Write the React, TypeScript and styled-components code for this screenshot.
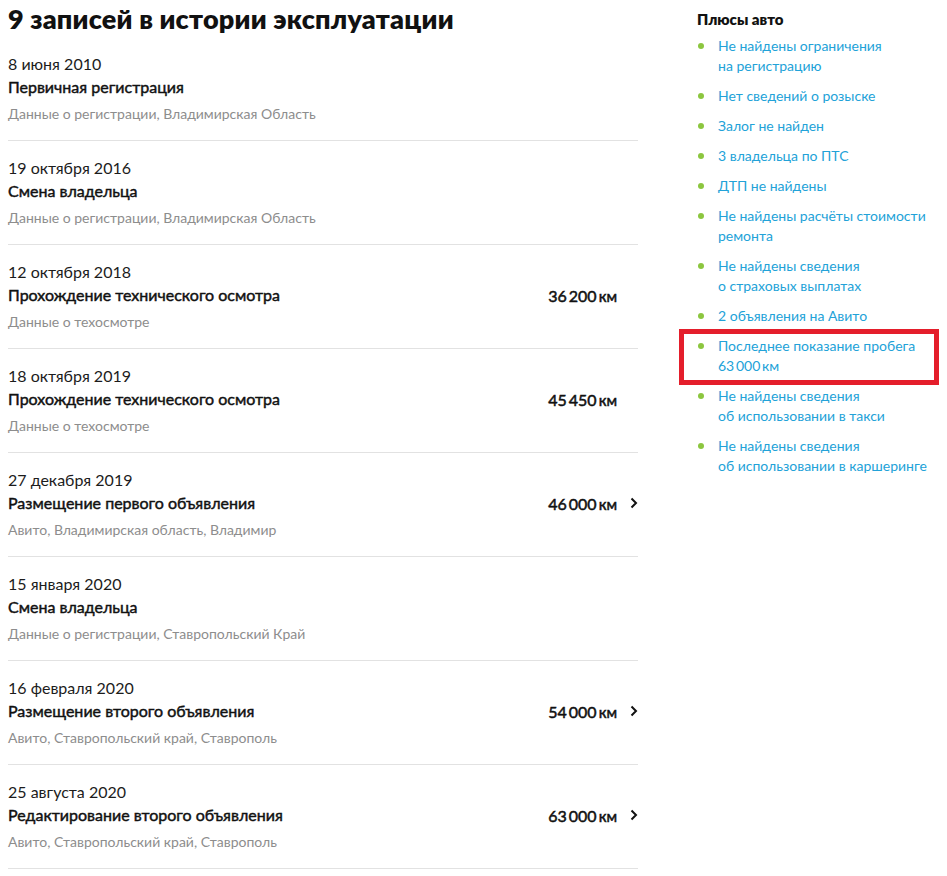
import React from "react";
import styled, { createGlobalStyle } from "styled-components";

const GlobalStyle = createGlobalStyle`
  body {
    margin: 0;
    background: #fff;
    font-family: Lato, "Noto Sans", sans-serif;
    color: #111;
  }
`;

const Page = styled.div`
  display: grid;
  grid-template-columns: 630px 1fr;
  column-gap: 59px;
  padding-left: 8px;
  width: 939px;
  box-sizing: border-box;
`;

const Heading = styled.h1`
  margin: 0;
  font-size: 27px;
  line-height: 37px;
  font-weight: 800;
  letter-spacing: 0.2px;
  color: #111;
`;

const Row = styled.div`
  display: flex;
  align-items: flex-start;
  justify-content: space-between;
  padding: 17px 0 16px;
  border-bottom: 1px solid #e2e2e2;
`;

const Info = styled.div`
  display: flex;
  flex-direction: column;
`;

const Date = styled.div`
  font-size: 16px;
  line-height: 20px;
  color: #1c1c1c;
`;

const Title = styled.div`
  margin-top: 2px;
  font-size: 16px;
  line-height: 22px;
  font-weight: 400;
  -webkit-text-stroke: 0.45px #111;
  color: #111;
`;

const Source = styled.div`
  margin-top: 6px;
  font-size: 14px;
  line-height: 20px;
  color: #8d8d8d;
`;

const Side = styled.div`
  display: flex;
  align-items: center;
  margin-top: 22px;
  height: 22px;
`;

const Mileage = styled.span`
  font-size: 16px;
  font-weight: 400;
  -webkit-text-stroke: 0.5px #111;
  color: #111;
`;

const Unit = styled.span`
  font-size: 15px;
`;

const ChevronSlot = styled.span`
  display: flex;
  align-items: center;
  justify-content: flex-end;
  width: 21px;
`;

const Aside = styled.aside`
  padding-top: 8px;
`;

const AsideTitle = styled.div`
  font-size: 15px;
  line-height: 22px;
  font-weight: 800;
  color: #111;
`;

const List = styled.ul`
  list-style: none;
  margin: 6px 0 0;
  padding: 0;
  display: flex;
  flex-direction: column;
  gap: 10px;
`;

const Item = styled.li<{ $marked?: boolean }>`
  position: relative;
  display: flex;
  gap: 14px;
  font-size: 14px;
  line-height: 20px;
  color: #22a2d8;

  &::before {
    content: "";
    flex: none;
    width: 6px;
    height: 6px;
    margin: 7px 0 0 1px;
    border-radius: 50%;
    background: #8cc63f;
  }

  ${(p) =>
    p.$marked &&
    `
    &::after {
      content: "";
      position: absolute;
      left: -18px;
      right: 0;
      top: -7px;
      bottom: -9px;
      border: 5px solid #e41e2b;
      pointer-events: none;
    }
  `}
`;

type Entry = {
  date: string;
  title: string;
  source: string;
  km?: string;
  link?: boolean;
};

const entries: Entry[] = [
  { date: "8 июня 2010", title: "Первичная регистрация", source: "Данные о регистрации, Владимирская Область" },
  { date: "19 октября 2016", title: "Смена владельца", source: "Данные о регистрации, Владимирская Область" },
  { date: "12 октября 2018", title: "Прохождение технического осмотра", source: "Данные о техосмотре", km: "36\u2009200" },
  { date: "18 октября 2019", title: "Прохождение технического осмотра", source: "Данные о техосмотре", km: "45\u2009450" },
  { date: "27 декабря 2019", title: "Размещение первого объявления", source: "Авито, Владимирская область, Владимир", km: "46\u2009000", link: true },
  { date: "15 января 2020", title: "Смена владельца", source: "Данные о регистрации, Ставропольский Край" },
  { date: "16 февраля 2020", title: "Размещение второго объявления", source: "Авито, Ставропольский край, Ставрополь", km: "54\u2009000", link: true },
  { date: "25 августа 2020", title: "Редактирование второго объявления", source: "Авито, Ставропольский край, Ставрополь", km: "63\u2009000", link: true },
];

const pluses: { lines: string[]; marked?: boolean }[] = [
  { lines: ["Не найдены ограничения", "на регистрацию"] },
  { lines: ["Нет сведений о розыске"] },
  { lines: ["Залог не найден"] },
  { lines: ["3 владельца по ПТС"] },
  { lines: ["ДТП не найдены"] },
  { lines: ["Не найдены расчёты стоимости", "ремонта"] },
  { lines: ["Не найдены сведения", "о страховых выплатах"] },
  { lines: ["2 объявления на Авито"] },
  { lines: ["Последнее показание пробега", "63\u2009000\u2009км"], marked: true },
  { lines: ["Не найдены сведения", "об использовании в такси"] },
  { lines: ["Не найдены сведения", "об использовании в каршеринге"] },
];

const Chevron = () => (
  <svg width="8" height="12" viewBox="0 0 8 12" fill="none">
    <path d="M1.5 1.5 6 6l-4.5 4.5" stroke="#111" strokeWidth="2" />
  </svg>
);

const App: React.FC = () => {
  return (
    <>
      <GlobalStyle />
      <Page>
        <main>
          <Heading>9 записей в истории эксплуатации</Heading>
          {entries.map((e, i) => (
            <Row key={i}>
              <Info>
                <Date>{e.date}</Date>
                <Title>{e.title}</Title>
                <Source>{e.source}</Source>
              </Info>
              {e.km && (
                <Side>
                  <Mileage>
                    {e.km}
                    {"\u2009"}
                    <Unit>км</Unit>
                  </Mileage>
                  <ChevronSlot>{e.link && <Chevron />}</ChevronSlot>
                </Side>
              )}
            </Row>
          ))}
        </main>
        <Aside>
          <AsideTitle>Плюсы авто</AsideTitle>
          <List>
            {pluses.map((p, i) => (
              <Item key={i} $marked={p.marked}>
                <span>
                  {p.lines.map((l, j) => (
                    <React.Fragment key={j}>
                      {j > 0 && <br />}
                      {l}
                    </React.Fragment>
                  ))}
                </span>
              </Item>
            ))}
          </List>
        </Aside>
      </Page>
    </>
  );
};

export default App;
